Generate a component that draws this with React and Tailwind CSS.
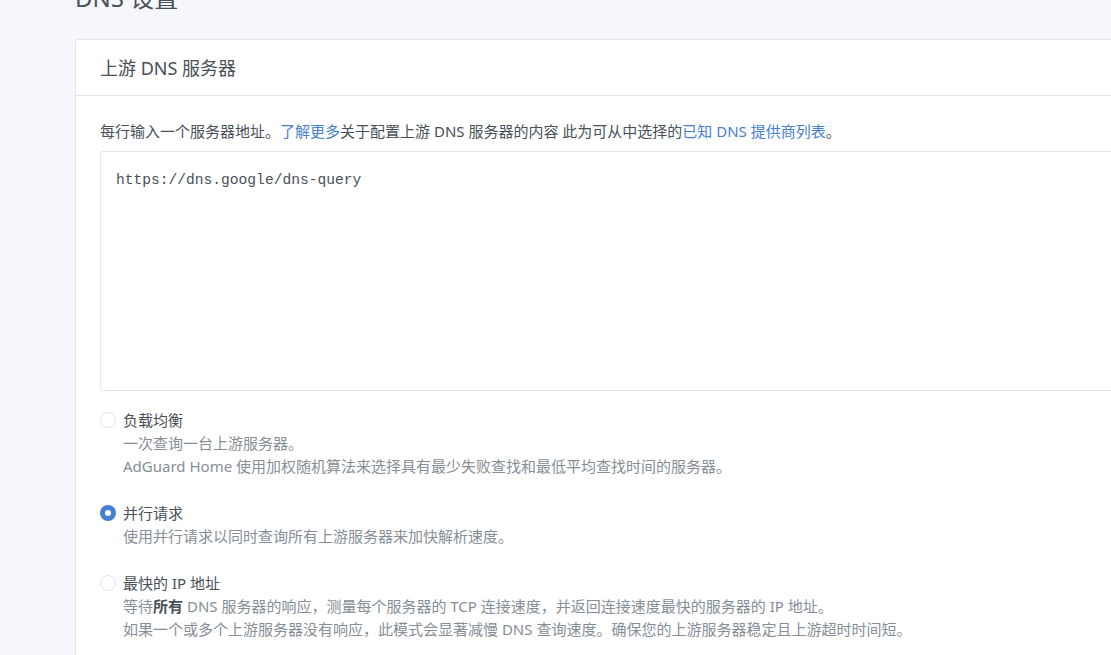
import { useState } from 'react';

const modes = [
  {
    id: 'load_balance',
    label: '负载均衡',
    desc: [
      '一次查询一台上游服务器。',
      'AdGuard Home 使用加权随机算法来选择具有最少失败查找和最低平均查找时间的服务器。',
    ],
  },
  {
    id: 'parallel',
    label: '并行请求',
    desc: ['使用并行请求以同时查询所有上游服务器来加快解析速度。'],
  },
  {
    id: 'fastest',
    label: '最快的 IP 地址',
    desc: [
      <>
        等待<b className="font-bold text-[#495057]">所有</b> DNS 服务器的响应，测量每个服务器的 TCP 连接速度，并返回连接速度最快的服务器的 IP 地址。
      </>,
      '如果一个或多个上游服务器没有响应，此模式会显著减慢 DNS 查询速度。确保您的上游服务器稳定且上游超时时间短。',
    ],
  },
];

function Radio({ checked }) {
  if (checked) {
    return (
      <span className="mt-[3px] w-4 h-4 shrink-0 rounded-full bg-[#467fcf] flex items-center justify-center">
        <span className="w-[6px] h-[6px] rounded-full bg-white" />
      </span>
    );
  }
  return <span className="mt-[3px] w-4 h-4 shrink-0 rounded-full bg-white border border-[#e0e5ec]" />;
}

export default function App() {
  const [mode, setMode] = useState('parallel');

  return (
    <div
      className="h-[655px] overflow-hidden bg-[#f5f7fb] text-[#495057] text-[15px]"
      style={{ fontFamily: '"Noto Sans", "Noto Sans CJK SC", sans-serif' }}
    >
      <div className="pl-[75px]">
        <h1 className="-mt-[17px] mb-[27px] text-[24px] leading-[29px] font-normal">DNS 设置</h1>

        <div className="w-[1100px] bg-white border border-[#e0e5ec] rounded-[3px]">
          <div className="h-[56px] px-6 flex items-center border-b border-[#e0e5ec]">
            <h3 className="text-[18px] leading-[24px] font-normal">上游 DNS 服务器</h3>
          </div>

          <div className="px-6 pt-6 pb-6">
            <div className="leading-[22.5px] mb-[8px]">
              每行输入一个服务器地址。<a className="text-[#467fcf]" href="#">了解更多</a>关于配置上游 DNS 服务器的内容 此为可从中选择的<a className="text-[#467fcf]" href="#">已知 DNS 提供商列表</a>。
            </div>

            <textarea
              readOnly
              defaultValue="https://dns.google/dns-query"
              className="block w-full h-[240px] resize-none border border-[#e0e5ec] rounded-[3px] pl-[15px] pt-[17px] text-[14.6px] leading-[22px] text-[#495057] outline-none"
              style={{ fontFamily: '"Liberation Mono", monospace' }}
            />

            <div className="mt-[18px] flex flex-col gap-6">
              {modes.map((m) => (
                <label key={m.id} className="flex gap-[7px] cursor-pointer" onClick={() => setMode(m.id)}>
                  <Radio checked={mode === m.id} />
                  <div className="leading-[23px]">
                    <div>{m.label}</div>
                    {m.desc.map((d, i) => (
                      <div key={i} className="text-[#868e96]">{d}</div>
                    ))}
                  </div>
                </label>
              ))}
            </div>
          </div>
        </div>
      </div>
    </div>
  );
}
